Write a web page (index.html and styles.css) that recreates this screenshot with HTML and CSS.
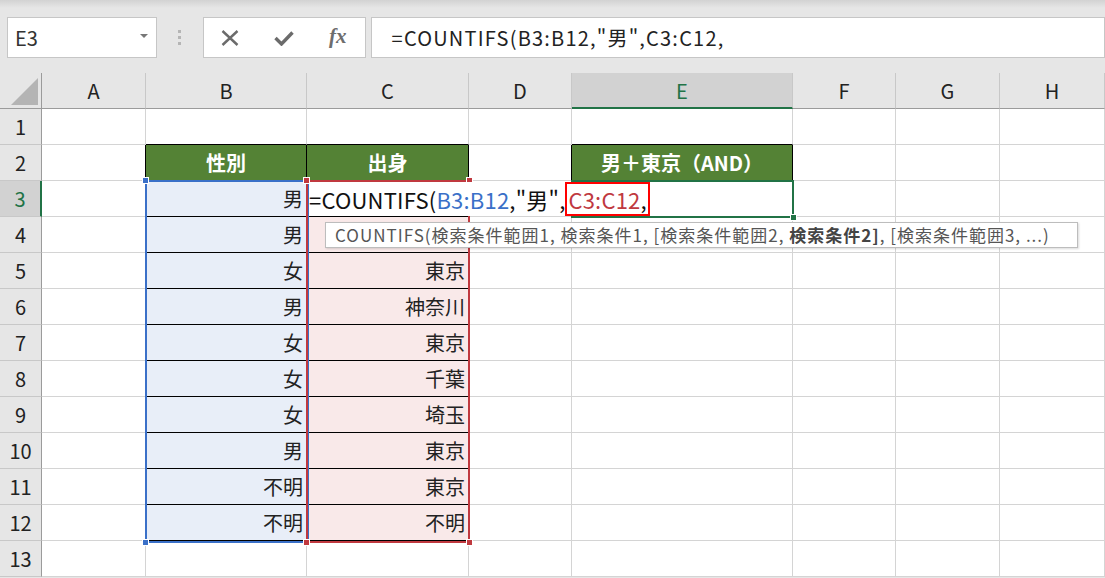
FILE: index.html
```html
<!DOCTYPE html>
<html lang="ja">
<head>
    <meta charset="UTF-8">
    <title>COUNTIFS</title>
    <link rel="stylesheet" href="styles.css">
</head>
<body>
    <div class="topbar">
        <div class="namebox"><span>E3</span><i class="caret"></i></div>
        <div class="grip"><i></i><i></i><i></i></div>
        <div class="fbtns">
            <span class="fbtn">
                <svg width="18" height="16" viewBox="0 0 18 16"><path d="M1.5 1 L16.5 15 M16.5 1 L1.5 15" stroke="#6b6b6b" stroke-width="2.4" fill="none"/></svg>
            </span>
            <span class="fbtn">
                <svg width="20" height="16" viewBox="0 0 20 16"><path d="M1.5 8 L7.5 14 L18.5 2.5" stroke="#6b6b6b" stroke-width="3.4" fill="none"/></svg>
            </span>
            <span class="fbtn fx">fx</span>
        </div>
        <div class="fbar">=COUNTIFS(B3:B12,"男",C3:C12,</div>
    </div>

    <div class="sheet-wrap">
        <div class="sheet"></div>

        <!-- 参照範囲の枠 -->
        <div class="range range-b">
            <i class="hdl tl"></i><i class="hdl bl"></i>
        </div>
        <div class="range range-c">
            <i class="hdl tl"></i><i class="hdl tr"></i><i class="hdl bl"></i><i class="hdl br"></i>
        </div>

        <!-- アクティブセル E3 -->
        <div class="active-cell"><i class="fill-hdl"></i></div>

        <!-- 編集中の数式 -->
        <div class="edit">=COUNTIFS(<span class="ref-b">B3:B12</span>,"男",<span class="ref-box"><span class="ref-c">C3:C12</span>,</span></div>

        <div class="tip">COUNTIFS(検索条件範囲1, 検索条件1, [検索条件範囲2, <b>検索条件2]</b>, [検索条件範囲3, ...)</div>
    </div>

    <script>
        var cols = ['A','B','C','D','E','F','G','H'];
        var bVals = ['男','男','女','男','女','女','女','男','不明','不明'];
        // C4はヒントに隠れて見えない
        var cVals = ['','','東京','神奈川','東京','千葉','埼玉','東京','東京','不明'];
        var heads = {B:'性別', C:'出身', E:'男＋東京（AND）'};
        var sheetEl = document.querySelector('.sheet');

        var str = '<div class="corner"><svg width="28" height="29" viewBox="0 0 28 29"><path d="M27 1 L27 28 L0 28 Z" fill="#b4b4b4"/></svg></div>';
        for(var i = 0; i < cols.length; i++){
            str += '<div class="col-hd' + (cols[i] == 'E' ? ' on' : '') + '">' + cols[i] + '</div>';
        }
        for(var r = 1; r <= 13; r++){
            str += '<div class="row-hd' + (r == 3 ? ' on' : '') + '">' + r + '</div>';
            for(var c = 0; c < cols.length; c++){
                var col = cols[c];
                var cls = 'cell';
                var txt = '';
                if(r == 2 && heads[col]){
                    cls += ' th';
                    txt = heads[col];
                }
                if(r >= 3 && r <= 12 && col == 'B'){
                    cls += ' rb';
                    txt = bVals[r-3];
                }
                if(r >= 3 && r <= 12 && col == 'C'){
                    cls += ' rc';
                    txt = cVals[r-3];
                }
                // 表の外枠 (左・上のセル側に黒線)
                if(r == 1 && heads[col]) cls += ' line-b';
                if((col == 'A' && r >= 2 && r <= 12) || (col == 'D' && r == 2)) cls += ' line-r';
                str += '<div class="' + cls + '">' + txt + '</div>';
            }
        }
        sheetEl.innerHTML = str;
    </script>
</body>
</html>
```

FILE: styles.css
```css
*{
    margin: 0;
    padding: 0;
    box-sizing: border-box;
}
body{
    width: 1105px;
    height: 578px;
    overflow: hidden;
    background: #e6e6e6;
    font-family: "Noto Sans CJK JP", "Liberation Sans", sans-serif;
    color: #222;
}

/* 数式バー */
.topbar{
    height: 73px;
    padding-top: 17px;
    display: flex;
    align-items: flex-start;
    background: linear-gradient(#d2d2d2, #e6e6e6 8px);
}
.namebox{
    width: 151px;
    height: 41px;
    margin-left: 7px;
    background: #fff;
    border: 1px solid #c6c6c6;
    display: flex;
    align-items: center;
    justify-content: space-between;
    padding: 0 8px 0 7px;
    font-size: 20px;
    color: #333;
}
.namebox .caret{
    width: 0;
    height: 0;
    border-left: 4px solid transparent;
    border-right: 4px solid transparent;
    border-top: 4px solid #777;
    margin-top: -4px;
}
.grip{
    width: 46px;
    height: 41px;
    display: flex;
    flex-direction: column;
    align-items: center;
    justify-content: center;
    gap: 3px;
}
.grip i{
    display: block;
    width: 3px;
    height: 3px;
    background: #b5b5b5;
}
.fbtns{
    width: 163px;
    height: 41px;
    background: #fff;
    border: 1px solid #c6c6c6;
    display: flex;
}
.fbtn{
    width: 54px;
    display: flex;
    align-items: center;
    justify-content: center;
}
.fbtn.fx{
    font-family: "Liberation Serif", serif;
    font-style: italic;
    font-weight: bold;
    font-size: 21px;
    color: #6d6d6d;
    padding-bottom: 2px;
}
.fbar{
    margin-left: 5px;
    width: 740px;
    height: 41px;
    background: #fff;
    border: 1px solid #c6c6c6;
    padding-left: 20px;
    font-size: 20px;
    letter-spacing: 1.2px;
    line-height: 39px;
    color: #222;
}

/* シート */
.sheet-wrap{
    position: relative;
}
.sheet{
    display: grid;
    grid-template-columns: 42px 104px 161px 162px 103px 221px 103px 104px 105px;
    grid-auto-rows: 36px;
    background: #fff;
}
.corner{
    background: #e6e6e6;
    border-right: 1px solid #9b9b9b;
    border-bottom: 1px solid #9b9b9b;
    display: flex;
    align-items: flex-end;
    justify-content: flex-end;
    padding: 0 2px 2px 0;
}
.col-hd{
    background: #e6e6e6;
    border-right: 1px solid #c8c8c8;
    border-bottom: 1px solid #9b9b9b;
    text-align: center;
    font-size: 20px;
    line-height: 35px;
}
.col-hd.on{
    background: #d2d2d2;
    color: #217346;
    border-bottom: 2px solid #217346;
}
.row-hd{
    background: #e6e6e6;
    border-right: 1px solid #9b9b9b;
    border-bottom: 1px solid #c8c8c8;
    text-align: center;
    font-size: 20px;
    line-height: 35px;
}
.row-hd.on{
    background: #d2d2d2;
    color: #217346;
    border-right: 2px solid #217346;
}
.cell{
    border-right: 1px solid #d4d4d4;
    border-bottom: 1px solid #d4d4d4;
    font-size: 20px;
    line-height: 35px;
    text-align: right;
    padding-right: 3px;
    white-space: nowrap;
}
.cell.th{
    background: #548235;
    color: #fff;
    font-weight: bold;
    text-align: center;
    padding-right: 0;
    border-right-color: #000;
    border-bottom-color: #000;
}
.cell.rb{
    background: #e8eef8;
    border-right-color: #000;
    border-bottom-color: #000;
}
.cell.rc{
    background: #f9e9e9;
    border-right-color: #000;
    border-bottom-color: #000;
}
.cell.line-b{
    border-bottom-color: #000;
}
.cell.line-r{
    border-right-color: #000;
}

/* 参照範囲 */
.range{
    position: absolute;
    top: 107px;
    width: 164px;
    height: 363px;
    border: 2px solid;
}
.range-b{
    left: 145px;
    border-color: #3a70c8;
}
.range-c{
    left: 306px;
    border-color: #c0393f;
}
.hdl{
    position: absolute;
    width: 7px;
    height: 7px;
    border: 1px solid #fff;
}
.range-b .hdl{ background: #3a70c8; }
.range-c .hdl{ background: #c0393f; }
.hdl.tl{ left: -5px; top: -5px; }
.hdl.tr{ right: -5px; top: -5px; }
.hdl.bl{ left: -5px; bottom: -5px; }
.hdl.br{ right: -5px; bottom: -5px; }

.active-cell{
    position: absolute;
    left: 571px;
    top: 107px;
    width: 223px;
    height: 38px;
    border: 2px solid #217346;
}
.fill-hdl{
    position: absolute;
    right: -5px;
    bottom: -5px;
    width: 7px;
    height: 7px;
    background: #217346;
    border: 1px solid #fff;
}

/* 編集中セル */
.edit{
    position: absolute;
    left: 309px;
    top: 109px;
    width: 482px;
    height: 34px;
    background: #fff;
    font-size: 22px;
    letter-spacing: 0.2px;
    line-height: 34px;
    white-space: nowrap;
    color: #111;
}
.edit .ref-b{ color: #3a70c8; }
.edit .ref-c{ color: #c0393f; }
.edit .ref-box{
    display: inline-block;
    vertical-align: top;
    height: 34px;
    line-height: 30px;
    border: 2px solid #ff0000;
    padding: 0 1px;
}

.tip{
    position: absolute;
    left: 325px;
    top: 149px;
    width: 753px;
    height: 26px;
    background: #fff;
    border: 1px solid #bdbdbd;
    box-shadow: 1px 1px 2px rgba(0, 0, 0, .15);
    padding-left: 9px;
    font-size: 17px;
    letter-spacing: 1px;
    line-height: 24px;
    color: #555;
    white-space: nowrap;
}
.tip b{
    color: #444;
}
```
